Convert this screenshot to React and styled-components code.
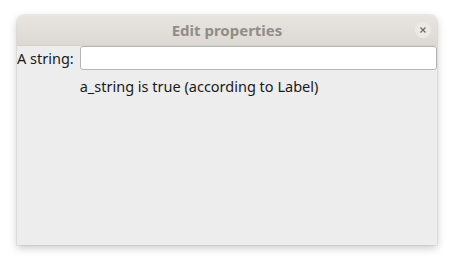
import React from "react"
import styled, { createGlobalStyle } from "styled-components"

const Global = createGlobalStyle`
  html, body {
    margin: 0;
    background: #ffffff;
  }
  body {
    font-family: "Noto Sans", "DejaVu Sans", sans-serif;
  }
`

const Page = styled.div`
  width: 457px;
  height: 264px;
  padding: 15px 20px 19px 17px;
  box-sizing: border-box;
`

const Window = styled.div`
  height: 100%;
  display: flex;
  flex-direction: column;
  background: #ededed;
  border-radius: 7px 7px 0 0;
  box-shadow: 0 3px 9px rgba(0, 0, 0, 0.22), 0 0 0 1px rgba(0, 0, 0, 0.05);
  overflow: hidden;
`

const TitleBar = styled.div`
  height: 30px;
  flex: none;
  position: relative;
  display: flex;
  align-items: center;
  justify-content: center;
  background: linear-gradient(#e8e5e1, #dcd8d2);
  border-bottom: 1px solid #d4d0ca;
`

const Title = styled.div`
  font-size: 15px;
  font-weight: bold;
  color: #918d89;
`

const CloseButton = styled.div`
  position: absolute;
  right: 6px;
  top: 7px;
  width: 16px;
  height: 16px;
  border-radius: 50%;
  background: #ebe8e5;
  display: flex;
  align-items: center;
  justify-content: center;
`

const Form = styled.div`
  display: grid;
  grid-template-columns: auto 1fr;
  column-gap: 6px;
  row-gap: 6px;
  align-items: center;
`

const Label = styled.label`
  font-size: 14.5px;
  color: #1a1a1a;
`

const Input = styled.input`
  height: 24px;
  box-sizing: border-box;
  border: 1px solid #b7b5b2;
  border-radius: 3px;
  background: #ffffff;
  margin: 0;
  outline: none;
`

const Note = styled.div`
  grid-column: 2;
  font-size: 14.5px;
  color: #1a1a1a;
`

export default function App() {
  return (
    <Page>
      <Global />
      <Window>
        <TitleBar>
          <Title>Edit properties</Title>
          <CloseButton>
            <svg width="8" height="8" viewBox="0 0 8 8">
              <path d="M1.5 1.5 L6.5 6.5 M6.5 1.5 L1.5 6.5" stroke="#6e6b68" strokeWidth="1.2" />
            </svg>
          </CloseButton>
        </TitleBar>
        <Form>
          <Label>A string:</Label>
          <Input type="text" />
          <Note>a_string is true (according to Label)</Note>
        </Form>
      </Window>
    </Page>
  )
}
